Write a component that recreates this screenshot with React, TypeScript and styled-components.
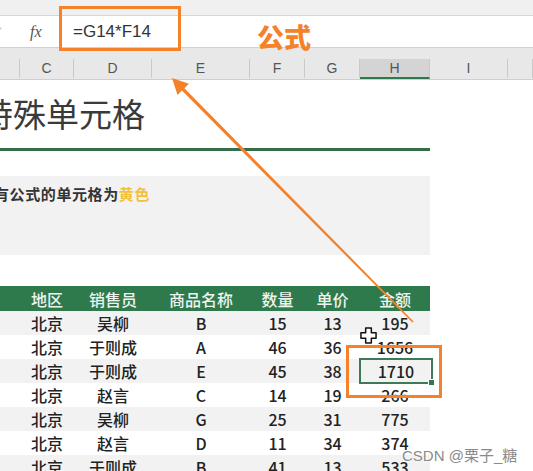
import React from 'react';
import styled, { createGlobalStyle } from 'styled-components';

const COLS = '20px 54px 78px 98px 55px 55px 70px 78px 25px';
const TABLE_COLS = '20px 54px 78px 98px 55px 55px 70px';
const ORANGE = '#f5822a';

const GlobalStyle = createGlobalStyle`
  html, body {
    margin: 0;
    padding: 0;
    background: #ffffff;
  }
  body {
    font-family: 'Noto Sans CJK SC', 'Noto Sans', sans-serif;
  }
`;

type TRow = [string, string, string, number, number, number];

const rows: TRow[] = [
  ['北京', '吴柳', 'B', 15, 13, 195],
  ['北京', '于则成', 'A', 46, 36, 1656],
  ['北京', '于则成', 'E', 45, 38, 1710],
  ['北京', '赵言', 'C', 14, 19, 266],
  ['北京', '吴柳', 'G', 25, 31, 775],
  ['北京', '赵言', 'D', 11, 34, 374],
  ['北京', '于则成', 'B', 41, 13, 533],
];

const letters = ['', 'C', 'D', 'E', 'F', 'G', 'H', 'I', ''];
const heads = ['', '地区', '销售员', '商品名称', '数量', '单价', '金额'];

function App(): JSX.Element {
  return (
    <Page>
      <GlobalStyle />
      <Toolbar />
      <FormulaBar>
        <Check>✓</Check>
        <Fx>fx</Fx>
        <FormulaText>=G14*F14</FormulaText>
      </FormulaBar>
      <HeaderGap />
      <ColumnHeader>
        {letters.map((l, i) => (
          <ColLetter key={i} $active={l === 'H'}>
            {l}
          </ColLetter>
        ))}
      </ColumnHeader>

      <Sheet>
        <Title>特殊单元格</Title>
        <TitleRule />
        <Note>
          有公式的单元格为<Yellow>黄色</Yellow>
        </Note>
        <Table>
          <HeadRow>
            {heads.map((h, i) => (
              <HeadCell key={i}>{h}</HeadCell>
            ))}
          </HeadRow>
          {rows.map((r, ri) => (
            <DataRow key={ri} $striped={ri % 2 === 0}>
              <Cell />
              {r.map((v, ci) => (
                <Cell key={ci} $selected={ri === 2 && ci === 5}>
                  {v}
                  {ri === 2 && ci === 5 && <Handle />}
                </Cell>
              ))}
            </DataRow>
          ))}
        </Table>
      </Sheet>

      <FormulaCallout />
      <CalloutLabel>公式</CalloutLabel>
      <CellCallout />
      <Arrow viewBox='0 0 533 471'>
        <polygon
          fill={ORANGE}
          points='172,78 177.5,95 181.9,90.6 412.4,322.6 413.6,321.4 184.4,88.2 188.9,83.8'
        />
      </Arrow>
      <Cursor viewBox='0 0 18 18'>
        <polygon
          points='6,1 12,1 12,6 17,6 17,12 12,12 12,17 6,17 6,12 1,12 1,6 6,6'
          fill='#fff'
          stroke='#111'
          strokeWidth='1.6'
          strokeLinejoin='round'
        />
      </Cursor>
      <Watermark>CSDN @栗子_糖</Watermark>
    </Page>
  );
}

export default App;

const Page = styled.div`
  position: relative;
  width: 533px;
  height: 471px;
  overflow: hidden;
  background: #fff;
`;

const Toolbar = styled.div`
  height: 15px;
  background: #f0f0f0;
  border-bottom: 1px solid #d6d6d6;
`;

const FormulaBar = styled.div`
  height: 31px;
  display: flex;
  align-items: center;
  background: #fff;
  border-bottom: 1px solid #d2d2d2;
`;

const Check = styled.span`
  width: 28px;
  margin-left: -8px;
  color: #c4c4c4;
  font-size: 14px;
`;

const Fx = styled.span`
  width: 40px;
  padding-left: 10px;
  font-family: 'Liberation Serif', serif;
  font-style: italic;
  font-size: 16px;
  color: #555;
`;

const FormulaText = styled.span`
  padding-left: 3px;
  font-family: 'Liberation Sans', Arial, sans-serif;
  font-size: 17px;
  color: #333;
`;

const HeaderGap = styled.div`
  height: 11px;
  background: #e8e8e8;
`;

const ColumnHeader = styled.div`
  display: grid;
  grid-template-columns: ${COLS};
  height: 20px;
  background: #e8e8e8;
  border-bottom: 1px solid #cfcfcf;
`;

const ColLetter = styled.div<{ $active?: boolean }>`
  display: flex;
  align-items: center;
  justify-content: center;
  box-sizing: border-box;
  border-right: 1px solid #c9c9c9;
  font-family: 'Liberation Sans', Arial, sans-serif;
  font-size: 14px;
  color: #555;
  background: ${(p) => (p.$active ? '#d4d4d4' : 'transparent')};
  border-bottom: 2px solid ${(p) => (p.$active ? '#2f7a4c' : 'transparent')};
`;

const Sheet = styled.div`
  display: flex;
  flex-direction: column;
`;

const Title = styled.div`
  height: 56px;
  padding: 10px 0 2px;
  margin-left: -20px;
  font-size: 33px;
  line-height: 46px;
  color: #3a3a3a;
  white-space: nowrap;
`;

const TitleRule = styled.div`
  width: 430px;
  height: 3px;
  background: #356d4b;
`;

const Note = styled.div`
  width: 436px;
  height: 79px;
  margin: 25px 0 0 -6px;
  box-sizing: border-box;
  padding: 9px 0 0;
  background: #f2f2f2;
  font-size: 15px;
  line-height: 18px;
  font-weight: 700;
  letter-spacing: 0.6px;
  color: #333;
`;

const Yellow = styled.span`
  color: #f3c03a;
`;

const Table = styled.div`
  width: 430px;
  margin-top: 31px;
  display: flex;
  flex-direction: column;
`;

const HeadRow = styled.div`
  display: grid;
  grid-template-columns: ${TABLE_COLS};
  height: 25px;
  background: #2f7a4c;
`;

const HeadCell = styled.div`
  display: flex;
  align-items: center;
  justify-content: center;
  font-size: 16px;
  font-weight: 500;
  color: #eef4f0;
  white-space: nowrap;
`;

const DataRow = styled.div<{ $striped: boolean }>`
  display: grid;
  grid-template-columns: ${TABLE_COLS};
  height: 24px;
  background: ${(p) => (p.$striped ? '#f2f2f2' : '#ffffff')};
`;

const Cell = styled.div<{ $selected?: boolean }>`
  position: relative;
  display: flex;
  align-items: center;
  justify-content: center;
  font-size: 16px;
  font-weight: 500;
  color: #222;
  white-space: nowrap;
  outline: ${(p) => (p.$selected ? '2px solid #3d7a55' : 'none')};
  outline-offset: -1px;
  margin-right: ${(p) => (p.$selected ? '-2px' : '0')};
`;

const Handle = styled.span`
  position: absolute;
  right: -3px;
  bottom: -3px;
  width: 5px;
  height: 5px;
  background: #2f7a4c;
  border: 1px solid #fff;
`;

const FormulaCallout = styled.div`
  position: absolute;
  left: 59px;
  top: 6px;
  width: 122px;
  height: 45px;
  box-sizing: border-box;
  border: 3px solid ${ORANGE};
`;

const CalloutLabel = styled.div`
  position: absolute;
  left: 257px;
  top: 19px;
  font-size: 27px;
  line-height: 36px;
  font-weight: 900;
  color: ${ORANGE};
`;

const CellCallout = styled.div`
  position: absolute;
  left: 346px;
  top: 345px;
  width: 96px;
  height: 53px;
  box-sizing: border-box;
  border: 3px solid ${ORANGE};
`;

const Arrow = styled.svg`
  position: absolute;
  left: 0;
  top: 0;
  width: 533px;
  height: 471px;
  pointer-events: none;
`;

const Cursor = styled.svg`
  position: absolute;
  left: 360px;
  top: 327px;
  width: 17px;
  height: 17px;
`;

const Watermark = styled.div`
  position: absolute;
  left: 402px;
  top: 444px;
  font-family: 'Liberation Sans', 'Noto Sans CJK SC', sans-serif;
  font-size: 15px;
  color: #8a8a8a;
  text-shadow: 0 0 2px #fff, 0 0 2px #fff;
  white-space: nowrap;
`;
